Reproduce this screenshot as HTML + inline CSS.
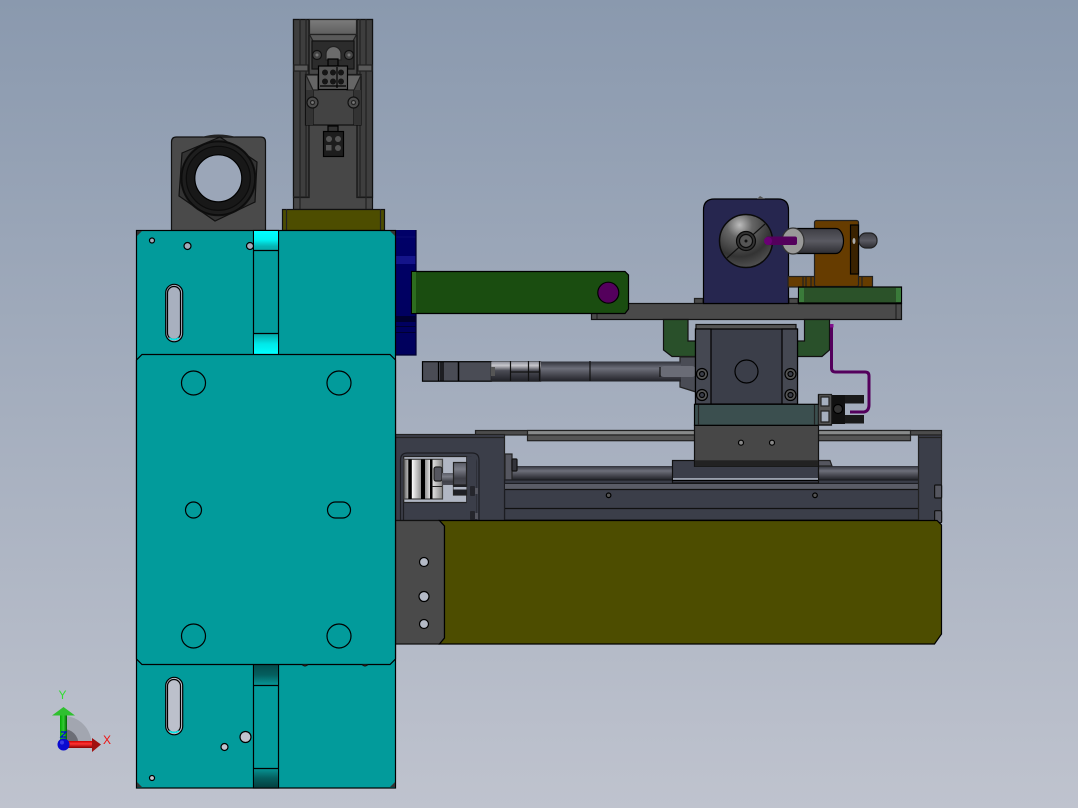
<!DOCTYPE html>
<html><head><meta charset="utf-8"><title>CAD assembly</title>
<style>html,body{margin:0;padding:0;width:1078px;height:808px;overflow:hidden}svg{display:block}</style></head>
<body>
<svg width="1078" height="808" viewBox="0 0 1078 808" xmlns="http://www.w3.org/2000/svg" stroke-width="1.2">
<defs>
<linearGradient id="bg" x1="0" y1="0" x2="0" y2="1"><stop offset="0" stop-color="#8a99ae"/><stop offset="1" stop-color="#bfc3ce"/></linearGradient>
<linearGradient id="cy" x1="0" y1="0" x2="0" y2="1"><stop offset="0" stop-color="#00ffff"/><stop offset=".45" stop-color="#00f4f4"/><stop offset=".8" stop-color="#05b5b5"/><stop offset="1" stop-color="#07a9a9"/></linearGradient>
<linearGradient id="cy2" x1="0" y1="0" x2="0" y2="1"><stop offset="0" stop-color="#07a5a5"/><stop offset=".5" stop-color="#00e8e8"/><stop offset="1" stop-color="#00ffff"/></linearGradient>
<linearGradient id="dk" x1="0" y1="0" x2="0" y2="1"><stop offset="0" stop-color="#034b4b"/><stop offset=".5" stop-color="#045f5f"/><stop offset="1" stop-color="#079595"/></linearGradient>
<linearGradient id="dk2" x1="0" y1="0" x2="0" y2="1"><stop offset="0" stop-color="#079595"/><stop offset=".5" stop-color="#045f5f"/><stop offset="1" stop-color="#034040"/></linearGradient>
<linearGradient id="rod" x1="0" y1="0" x2="0" y2="1"><stop offset="0" stop-color="#30323a"/><stop offset=".35" stop-color="#6d6f7a"/><stop offset=".55" stop-color="#55565f"/><stop offset="1" stop-color="#202127"/></linearGradient>
<linearGradient id="rod2" x1="0" y1="0" x2="0" y2="1"><stop offset="0" stop-color="#8a8c97"/><stop offset=".2" stop-color="#c8c8cd"/><stop offset=".45" stop-color="#4b4c55"/><stop offset="1" stop-color="#1f2026"/></linearGradient>
<linearGradient id="shaft" x1="0" y1="0" x2="0" y2="1"><stop offset="0" stop-color="#5a5c66"/><stop offset=".3" stop-color="#7a7c86"/><stop offset=".7" stop-color="#3f4048"/><stop offset="1" stop-color="#4a4b54"/></linearGradient>
<linearGradient id="cyl" x1="0" y1="0" x2="0" y2="1"><stop offset="0" stop-color="#3e3e44"/><stop offset=".5" stop-color="#5a5a62"/><stop offset="1" stop-color="#2d2d32"/></linearGradient>
<linearGradient id="cpl" x1="0" y1="0" x2="1" y2="0"><stop offset="0" stop-color="#666"/><stop offset=".2" stop-color="#fff"/><stop offset=".5" stop-color="#777"/><stop offset=".7" stop-color="#eee"/><stop offset="1" stop-color="#888"/></linearGradient>
<radialGradient id="ball" cx=".38" cy=".2" r=".85"><stop offset="0" stop-color="#bcbcbc"/><stop offset=".28" stop-color="#666"/><stop offset=".7" stop-color="#333"/><stop offset="1" stop-color="#555"/></radialGradient>
<linearGradient id="rArrow" x1="0" y1="0" x2="0" y2="1"><stop offset="0" stop-color="#c00"/><stop offset=".4" stop-color="#f33"/><stop offset="1" stop-color="#800"/></linearGradient>
<linearGradient id="gArrow" x1="0" y1="0" x2="1" y2="0"><stop offset="0" stop-color="#0a0"/><stop offset=".5" stop-color="#3c3"/><stop offset="1" stop-color="#060"/></linearGradient>
<linearGradient id="blu" x1="0" y1="0" x2="0" y2="1"><stop offset="0" stop-color="#000068"/><stop offset="1" stop-color="#00005c"/></linearGradient>
<linearGradient id="cap" x1="0" y1="0" x2="0" y2="1"><stop offset="0" stop-color="#7c7c7c"/><stop offset="1" stop-color="#5e5e5e"/></linearGradient>
</defs>
<rect width="1078" height="808" fill="url(#bg)"/>

<!-- blue disk behind -->
<rect x="395" y="230" width="21" height="125" fill="url(#blu)"/>
<rect x="395" y="236" width="21" height="2" fill="#05056c"/>
<rect x="395" y="256" width="21" height="8" fill="#14148a"/>
<rect x="395" y="316" width="21" height="6" fill="#000030"/>
<rect x="395" y="326" width="21" height="1" fill="#000030"/>
<rect x="395" y="332" width="21" height="1" fill="#000030"/>
<path d="M416 230V272M416 314V355H395" fill="none" stroke="#000030"/>

<!-- hex gland block -->
<path d="M171.500 231V142q0-5 5-5h84q5 0 5 5v89z" fill="#4a4a4a" stroke="#111"/>
<path d="M202 137q16-5 34 0z" fill="#222"/>
<path d="M220 137L257 162L255 202L215 221L179 196L182 153Z" fill="#333" stroke="#111"/>
<circle cx="218.300" cy="178.300" r="38" fill="#111"/>
<circle cx="218.300" cy="178.300" r="36.500" fill="#1e1e1e" stroke="#0c0c0c"/>
<circle cx="218.300" cy="178.300" r="32" fill="#181818" stroke="#0c0c0c"/>
<circle cx="218.300" cy="178.300" r="23.500" fill="#9ba6b8" stroke="#000"/>

<!-- motor -->
<rect x="293.500" y="19.500" width="79" height="190" fill="#474747" stroke="#111"/>
<rect x="293.500" y="19.500" width="15.500" height="178" fill="#3e3e3e" stroke="#111"/>
<rect x="357" y="19.500" width="15.500" height="178" fill="#3e3e3e" stroke="#111"/>
<path d="M300 19V197M306 19V197M360 19V197M366 19V197M300 197V209M366 197V209M293 197H309M357 197H372" stroke="#222" fill="none"/>
<rect x="294" y="65" width="14" height="6" fill="#5a5a5a" stroke="#222"/>
<rect x="358" y="65" width="14" height="6" fill="#5a5a5a" stroke="#222"/>
<rect x="309.500" y="19.500" width="47" height="15" fill="url(#cap)" stroke="#222"/>
<path d="M309.500 34.500H356.500L353 41H313Z" fill="#5a5a5a" stroke="#222"/>
<rect x="312" y="41" width="42" height="28" fill="#2c2c2c" stroke="#111"/>
<path d="M326 60V54a7.500 7.500 0 0 1 15 0v6z" fill="#6c6c6c" stroke="#222"/>
<circle cx="317" cy="55" r="4.500" fill="#444" stroke="#111"/><circle cx="317" cy="55" r="1.500" fill="#777"/>
<circle cx="349" cy="55" r="4.500" fill="#444" stroke="#111"/><circle cx="349" cy="55" r="1.500" fill="#777"/>
<path d="M305.500 74.500H361V125H305.500Z" fill="#434343" stroke="#111"/>
<path d="M313 90V125M354 90V125" fill="none" stroke="#111"/>
<path d="M306 75H318V90H313ZM361 75H347V90H354Z" fill="#666" stroke="#222"/>
<rect x="306" y="90" width="7" height="35" fill="#333"/><rect x="354" y="90" width="7" height="35" fill="#333"/>
<rect x="328" y="59" width="10" height="7" fill="#2a2a2a" stroke="#000"/>
<rect x="318.500" y="66" width="29" height="23.500" fill="#555" stroke="#000"/>
<g fill="#161616"><circle cx="325" cy="72.500" r="3"/><circle cx="333" cy="72.500" r="3"/><circle cx="341" cy="72.500" r="3"/><circle cx="325" cy="81.500" r="3"/><circle cx="333" cy="81.500" r="3"/><circle cx="341" cy="81.500" r="3"/></g>
<path d="M320 86H346M337 67V88" stroke="#000" fill="none"/>
<circle cx="312.500" cy="102.500" r="5.500" fill="#4c4c4c" stroke="#111"/><circle cx="312.500" cy="102.500" r="2" fill="#777" stroke="#222"/>
<circle cx="353.500" cy="102.500" r="5.500" fill="#4c4c4c" stroke="#111"/><circle cx="353.500" cy="102.500" r="2" fill="#777" stroke="#222"/>
<rect x="328" y="126" width="10" height="6" fill="#333" stroke="#000"/>
<rect x="323.500" y="131.500" width="20" height="25" fill="#1d1d1d" stroke="#000"/>
<g fill="#555"><circle cx="329" cy="139" r="3"/><circle cx="338" cy="139" r="3"/><rect x="326" y="145" width="5.500" height="5.500"/><circle cx="338" cy="148" r="3"/></g>
<rect x="282.500" y="209.500" width="102" height="21" fill="#4d4d00" stroke="#111"/>
<path d="M286.500 209V230M380.500 209V230" stroke="#222" fill="none"/>

<!-- grey plate & upper assembly -->
<path d="M694.500 303.500V298.500H703V303.500ZM789 298.500H798V303.500H789Z" fill="#4a4a4a" stroke="#222"/>
<rect x="591.500" y="303.500" width="310" height="16" fill="#4a4a4a" stroke="#111"/>
<path d="M597 304V319M896 304V319" stroke="#222"/>
<path d="M663.500 319.500H688V341H696V356.500H672L663.500 350Z" fill="#29502a" stroke="#111"/>
<path d="M829.500 319.500H804.500V341H797V356.500H822L829.500 350Z" fill="#29502a" stroke="#111"/>

<!-- green arm -->
<path d="M411.500 271.500H625L628.500 275V309L625 313.500H411.500Z" fill="#1a4d10" stroke="#000"/>
<rect x="412" y="272" width="4" height="41" fill="#2d6d1f"/>
<circle cx="608.300" cy="292.700" r="10.500" fill="#54005c" stroke="#000"/>

<!-- navy block -->
<path d="M703.500 303.500V210q0-11 11-11H778q10.500 0 10.500 11v93.500Z" fill="#26264f" stroke="#000"/>
<path d="M757 199l3-3 5 3z" fill="#555"/>
<circle cx="746" cy="241" r="26.500" fill="url(#ball)" stroke="#0a0a0a" stroke-width="1.500"/>
<path d="M727 258L765 224" stroke="#111"/>
<circle cx="746" cy="241" r="9.500" fill="#333" stroke="#0a0a0a"/>
<circle cx="746" cy="241" r="6.500" fill="#555" stroke="#0a0a0a"/>
<circle cx="746" cy="241" r="1.500" fill="#111"/>

<!-- orange bracket -->
<rect x="788" y="276.500" width="84.500" height="10.500" fill="#663c00" stroke="#222"/>
<path d="M803 277V287M806 277V287M811 277V287M856 277V287M862 277V287" stroke="#222"/>
<rect x="814.500" y="220.500" width="44" height="66" rx="2" fill="#663c00" stroke="#222"/>
<rect x="850.500" y="225" width="8" height="49" fill="#3a2200" stroke="#000"/>
<ellipse cx="854" cy="241" rx="1.500" ry="3" fill="#aaa"/>
<rect x="859" y="233" width="18" height="15" rx="7" fill="url(#cyl)" stroke="#222"/>
<path d="M793 228.500H836a7.500 12.500 0 0 1 0 25H793Z" fill="url(#cyl)" stroke="#000"/>
<ellipse cx="793" cy="241" rx="11" ry="13" fill="#999" stroke="#333"/>
<rect x="766" y="236.500" width="31" height="8.500" rx="2" fill="#54005c"/>
<circle cx="768" cy="241" r="4" fill="#6a0074"/>

<rect x="798.500" y="287" width="103" height="16" fill="#2b5229" stroke="#000"/>
<rect x="799" y="288" width="5" height="14" fill="#3a7a3a"/>
<rect x="896" y="288" width="5" height="14" fill="#3a7a3a"/>
<path d="M798 303.500H902" stroke="#000" stroke-width="1.500"/>

<!-- lower frame top rail -->
<rect x="475.500" y="430.500" width="466" height="4.500" fill="#4c4c4c" stroke="#222"/>
<rect x="527.500" y="430.500" width="383" height="4.500" fill="#888a8a" stroke="#222"/>
<rect x="527.500" y="435" width="383" height="5.700" fill="#555" stroke="#222"/>

<!-- left housing -->
<rect x="395" y="434.500" width="109.500" height="86" fill="#3b3e49" stroke="#222"/>
<path d="M395 437.500H504" stroke="#222"/>
<path d="M400.500 520V460q0-7 7-7H472q7 0 7 7v60" fill="none" stroke="#1c1d22"/>
<path d="M403.500 520V462q0-5 5-5H471q5 0 5 5v58" fill="none" stroke="#1c1d22"/>
<rect x="403.700" y="456.500" width="63" height="46" fill="#b0b6c3" stroke="#222"/>
<rect x="466.700" y="456.500" width="9.500" height="60" fill="#3b3e49"/>
<rect x="404" y="459.300" width="38.500" height="39.700" fill="url(#cpl)" stroke="#444"/>
<rect x="408.300" y="459.300" width="3.500" height="39.700" fill="#000"/>
<rect x="421" y="459.300" width="4" height="39.700" fill="#000"/>
<rect x="430" y="459.300" width="2.500" height="39.700" fill="#000"/>
<rect x="434" y="467" width="8" height="14" rx="2" fill="#55565f" stroke="#222"/>
<rect x="432" y="486" width="10" height="1" fill="#222"/>
<rect x="442" y="473" width="11.500" height="12" fill="url(#shaft)"/>
<rect x="453.500" y="462.500" width="13" height="22.500" fill="url(#shaft)" stroke="#222"/>
<rect x="453.500" y="485" width="13" height="10" fill="#1f2026" stroke="#222"/>
<rect x="453.500" y="487" width="13" height="2.500" fill="#b0b6c3"/>
<rect x="470" y="486" width="5" height="10" rx="1" fill="#25262c"/><rect x="475" y="488" width="3" height="6" fill="#55565f"/>
<rect x="470" y="511" width="5" height="9" rx="1" fill="#25262c"/><rect x="475" y="513" width="3" height="6" fill="#55565f"/>

<!-- rail body -->
<rect x="505" y="466" width="414" height="14" fill="url(#rod)"/>
<rect x="505" y="454" width="7" height="26" fill="#55565f" stroke="#222"/>
<rect x="512" y="459" width="5" height="12" rx="1" fill="#33343b" stroke="#111"/>
<rect x="504.600" y="480" width="414" height="40" fill="#3b3e49" stroke="#1c1d22"/>
<path d="M505 483.500H918" stroke="#1c1d22"/><rect x="505" y="484" width="413" height="5" fill="#5a5c66"/>
<path d="M505 489.500H918" stroke="#111"/><path d="M505 508.500H918" stroke="#111"/>
<circle cx="608.600" cy="495.300" r="2.300" fill="#555" stroke="#000"/><circle cx="815" cy="495.300" r="2.300" fill="#555" stroke="#000"/>
<!-- right post -->
<rect x="918.500" y="435" width="23" height="86" fill="#3b3e49" stroke="#222"/>
<path d="M919 437.500H941" stroke="#222"/>
<rect x="934.600" y="485" width="7" height="13" rx="1" fill="#55565f" stroke="#111"/>
<rect x="934.600" y="510.700" width="7" height="12" rx="1" fill="#55565f" stroke="#111"/>

<!-- rod -->
<path d="M680 357H696V392L680 387Z" fill="#4a4c55" stroke="#222"/>
<rect x="422.500" y="361.700" width="69" height="19.500" fill="#4a4c55" stroke="#000"/>
<path d="M438.500 362V381M441 362V381M443 362V381" stroke="#000"/><path d="M458.500 362V381" stroke="#000" stroke-width="1.500"/>
<rect x="491" y="361.500" width="50" height="20" fill="url(#rod2)" stroke="#222" stroke-width=".5"/>
<rect x="491" y="367" width="4" height="9" fill="#555"/>
<rect x="541" y="361.500" width="140" height="20" fill="url(#rod)"/>
<rect x="660" y="366" width="36" height="11" rx="4" fill="#6a6c76"/>
<path d="M510.500 361V381M528.500 361V381M539.500 361V381M510 372H539M590 361V381M660 367V377" stroke="#111" fill="none"/>

<!-- central block -->
<rect x="696" y="324.500" width="100" height="5" fill="#555" stroke="#111"/>
<rect x="695.500" y="329" width="102" height="75" fill="#3b3e49" stroke="#000"/>
<rect x="695.500" y="329" width="15.500" height="75" fill="#454852" stroke="#000"/>
<rect x="782" y="329" width="15.500" height="75" fill="#454852" stroke="#000"/>
<circle cx="746.500" cy="371.500" r="11.500" fill="none" stroke="#000"/>
<g fill="#555" stroke="#000"><circle cx="702" cy="374" r="5.500"/><circle cx="702" cy="395" r="5.500"/><circle cx="790.500" cy="374" r="5.500"/><circle cx="790.500" cy="395" r="5.500"/></g>
<g fill="#3b3e49" stroke="#000"><circle cx="702" cy="374" r="2.500"/><circle cx="702" cy="395" r="2.500"/><circle cx="790.500" cy="374" r="2.500"/><circle cx="790.500" cy="395" r="2.500"/></g>

<!-- slide blocks -->
<rect x="672.500" y="460.500" width="146" height="22.500" fill="#3b3e49" stroke="#111"/>
<rect x="673" y="478" width="145" height="2" fill="#9aa0ad"/>
<path d="M672 480.500H818" stroke="#000"/>
<path d="M818 460.500H830L832 466H818" fill="#55565f" stroke="#222"/>
<rect x="694.500" y="425.300" width="124" height="41" fill="#474747" stroke="#111"/>
<rect x="695" y="460.300" width="123" height="6" fill="#222"/>
<circle cx="741" cy="442.700" r="2.500" fill="#888" stroke="#000"/><circle cx="772" cy="442.700" r="2.500" fill="#888" stroke="#000"/>
<rect x="694.500" y="404.300" width="124" height="21" fill="#3b4f4f" stroke="#000"/>
<path d="M698.500 405V425M814.500 405V425" stroke="#222"/>

<!-- gripper -->
<rect x="832" y="395" width="32" height="8.500" fill="#1a1a1a"/>
<rect x="832" y="395" width="13" height="29" fill="#111"/>
<rect x="845" y="415" width="19" height="8.500" fill="#1a1a1a"/>
<circle cx="838" cy="409" r="4.500" fill="#333" stroke="#000"/>
<path d="M818.500 425V394.500H831.500V425ZM821 397H829V406H821ZM821 411H829V422H821Z" fill="#555" fill-rule="evenodd" stroke="#222"/>
<path d="M818.500 394.500V405M818 425H832" stroke="#111"/>
<!-- purple cable -->
<path d="M831.500 326V368q0 4 4 4H865q4 0 4 4V405q0 6-5 7H850" fill="none" stroke="#54005c" stroke-width="3"/>
<rect x="830" y="324" width="3.500" height="3.500" fill="#80108c"/>

<!-- olive plate -->
<path d="M395 520.500H439.500L444.500 526V638L439.500 644H395Z" fill="#4a4a4a" stroke="#111"/>
<path d="M439.500 520.500H937L941.500 525V634L934.500 644H439.500L444.500 638V526Z" fill="#4d4d00" stroke="#000"/>
<circle cx="424" cy="562" r="4.500" fill="#b4bac6" stroke="#000"/>
<circle cx="424" cy="596.500" r="5" fill="#b4bac6" stroke="#000"/>
<circle cx="424" cy="624" r="4.500" fill="#b4bac6" stroke="#000"/>

<!-- main teal plate -->
<rect x="136.500" y="230.500" width="259" height="557.500" fill="#029b9b" stroke="#000"/>
<path d="M137 231h5l-5 5zM390 231h5v5zM137 787v-5l5 5zM395 787v-5l-5 5z" fill="#333"/>
<rect x="253.500" y="230.500" width="25" height="124" fill="#029b9b" stroke="#000"/>
<rect x="254" y="231" width="24" height="19" fill="url(#cy)"/>
<rect x="254" y="333.500" width="24" height="20.500" fill="url(#cy2)"/>
<path d="M253.500 250.500H278.500M253.500 333.500H278.500" stroke="#000"/>
<rect x="253.500" y="664" width="25" height="124" fill="#029b9b" stroke="#000"/>
<rect x="254" y="665" width="24" height="20" fill="url(#dk)"/>
<rect x="254" y="768.500" width="24" height="19" fill="url(#dk2)"/>
<path d="M253.500 685.500H278.500M253.500 768.500H278.500" stroke="#000"/>

<path d="M142 354.500H390L395.500 360V659L390 664.500H142L136.500 659V360Z" fill="#029b9b" stroke="#000"/>
<g fill="#029b9b" stroke="#000">
<circle cx="193.500" cy="383" r="12"/><circle cx="339" cy="383" r="12"/>
<circle cx="193.500" cy="636" r="12"/><circle cx="339" cy="636" r="12"/>
<circle cx="193.500" cy="510" r="8"/>
<rect x="327.500" y="502" width="23" height="16" rx="8"/>
</g>
<g fill="#a3abba" stroke="#000">
<circle cx="152" cy="240.500" r="2.500"/><circle cx="187.500" cy="246" r="3.500"/><circle cx="250" cy="246" r="3.500"/>
</g>
<g fill="#c0c4ce" stroke="#000">
<circle cx="245.500" cy="737" r="5.500"/><circle cx="224.500" cy="747" r="3.500"/><circle cx="152" cy="778" r="2.500"/>
</g>
<path d="M302 664.500q3 3 6 0M362 664.500q3 3 6 0" fill="#333" stroke="#111"/>
<rect x="165.700" y="284.300" width="17" height="57.500" rx="8.500" fill="#a8b0bf" stroke="#000"/>
<rect x="167.500" y="286.500" width="13" height="53" rx="6.500" fill="#a8b0bf" stroke="#000"/>
<path d="M169 338q5 3 10 0" stroke="#00e8e8" stroke-width="1.500" fill="none"/>
<rect x="165.700" y="677.300" width="17" height="57.500" rx="8.500" fill="#bcc0cb" stroke="#000"/>
<rect x="167.500" y="679.500" width="13" height="53" rx="6.500" fill="#bcc0cb" stroke="#000"/>
<path d="M169 731q5 3 10 0" stroke="#00e8e8" stroke-width="1.500" fill="none"/>

<!-- triad -->
<path d="M63.500 744V716A28 28 0 0 1 91.500 744Z" fill="#a2a6b0"/>
<path d="M63.500 744V729A15 15 0 0 1 78.500 744Z" fill="#6c6e76"/>
<rect x="60" y="715" width="7" height="28" fill="url(#gArrow)"/>
<path d="M63.500 707L52 715.500H75Z" fill="#2fc02f"/>
<rect x="66" y="741" width="27" height="7" fill="url(#rArrow)"/>
<path d="M101 744.500L92 738V752Z" fill="#a01010"/>
<path d="M61 732H66L61 737H66" stroke="#0000e0" fill="none"/>
<circle cx="63.500" cy="744.500" r="6" fill="#0a0ad0"/>
<circle cx="62" cy="742.500" r="2" fill="#3a3ae8"/>
<text x="62.500" y="699" font-family="Liberation Sans, sans-serif" font-size="12" fill="#33dd33" text-anchor="middle">Y</text>
<text x="107" y="744" font-family="Liberation Sans, sans-serif" font-size="12" fill="#ee1111" text-anchor="middle">X</text>
</svg>
</body></html>
